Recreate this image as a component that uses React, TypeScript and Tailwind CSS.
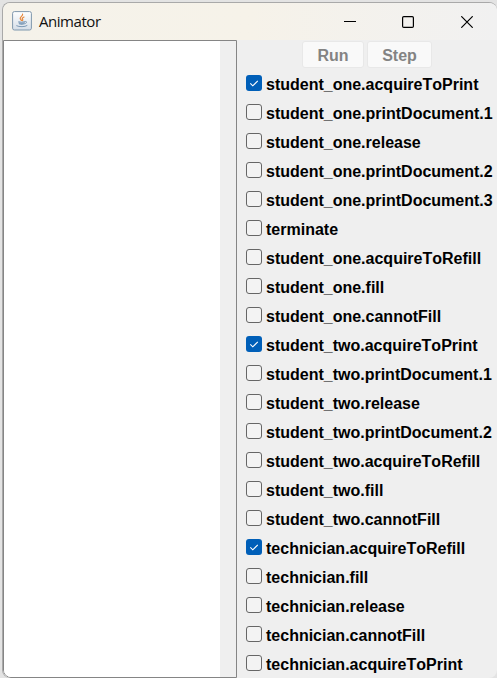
const actions: { name: string; enabled: boolean }[] = [
  { name: "student_one.acquireToPrint", enabled: true },
  { name: "student_one.printDocument.1", enabled: false },
  { name: "student_one.release", enabled: false },
  { name: "student_one.printDocument.2", enabled: false },
  { name: "student_one.printDocument.3", enabled: false },
  { name: "terminate", enabled: false },
  { name: "student_one.acquireToRefill", enabled: false },
  { name: "student_one.fill", enabled: false },
  { name: "student_one.cannotFill", enabled: false },
  { name: "student_two.acquireToPrint", enabled: true },
  { name: "student_two.printDocument.1", enabled: false },
  { name: "student_two.release", enabled: false },
  { name: "student_two.printDocument.2", enabled: false },
  { name: "student_two.acquireToRefill", enabled: false },
  { name: "student_two.fill", enabled: false },
  { name: "student_two.cannotFill", enabled: false },
  { name: "technician.acquireToRefill", enabled: true },
  { name: "technician.fill", enabled: false },
  { name: "technician.release", enabled: false },
  { name: "technician.cannotFill", enabled: false },
  { name: "technician.acquireToPrint", enabled: false },
];

function JavaIcon() {
  return (
    <svg className="size-5 shrink-0" viewBox="0 0 20 20" fill="none">
      <defs>
        <linearGradient id="tile" x1="0" y1="0" x2="0" y2="1">
          <stop offset="0" stopColor="#ffffff" />
          <stop offset="1" stopColor="#d5dee8" />
        </linearGradient>
      </defs>
      <rect x="0.6" y="0.6" width="18.8" height="18.4" rx="1.8" fill="url(#tile)" stroke="#7f97ad" />
      <path d="M10.600 3.200c.5 1.700-2.700 2.500-2.400 4.300.2.800 1 1.300 1.200 2M12 6c-1.700.8-2.100 1.500-1.400 2.300.4.500.3 1-.1 1.400" stroke="#e8873a" strokeWidth="1.200" strokeLinecap="round" />
      <path d="M6.300 10.300c1.600.6 4.800.6 6.600 0l-.5 3c-1.600.6-3.900.6-5.400 0z" fill="#6f90b0" />
      <path d="M13 10.500c2.300-.5 2.300 1.600-.2 2.200M4.700 14.800c2.500 1.300 8.200 1.200 10.300-.2" stroke="#7c99b5" strokeWidth="1" strokeLinecap="round" />
      <path d="M7 11.900h5.400" stroke="#d7e1eb" strokeWidth="0.6" />
    </svg>
  );
}

function TitleBar() {
  return (
    <header className="flex h-[37px] shrink-0 items-center bg-linear-to-r from-[#f5f2ea] via-[#f6f2e9] to-[#f1f1f1] pb-px pl-[9px]">
      <JavaIcon />
      <span className="ml-[7px] grow font-['Open_Sans','Noto_Sans',sans-serif] text-[15px] tracking-[-0.45px] text-[#111]">
        Animator
      </span>
      <div className="flex items-center pt-px text-black">
        <svg className="mr-[46px] size-3" viewBox="0 0 12 12" fill="none" stroke="currentColor">
          <path d="M0 5.500h12" strokeWidth="1.2" />
        </svg>
        <svg className="mr-[47px] size-3" viewBox="0 0 12 12" fill="none" stroke="currentColor">
          <rect x="0.6" y="0.6" width="10.800" height="10.800" rx="1.200" strokeWidth="1.2" />
        </svg>
        <svg className="mr-6 size-3" viewBox="0 0 12 12" fill="none" stroke="currentColor">
          <path d="M.3.3l11.400 11.400M11.700.3L.3 11.700" strokeWidth="1.2" />
        </svg>
      </div>
    </header>
  );
}

function ActionRow({ name, enabled }: { name: string; enabled: boolean }) {
  return (
    <label className="flex h-[29px] shrink-0 items-start pt-[5px]">
      <span
        className={
          enabled
            ? "flex size-4 shrink-0 items-center justify-center rounded-[3px] bg-[#005fb8]"
            : "size-4 shrink-0 rounded-[3px] border border-[#666666] bg-[#f3f3f3]"
        }
      >
        {enabled && (
          <svg className="size-4" viewBox="0 0 16 16" fill="none" stroke="white">
            <path d="M4.300 8.300l2.500 2.500 5-5" strokeWidth="1.100" />
          </svg>
        )}
      </span>
      <span className="ml-1 leading-5 whitespace-nowrap [font-kerning:none]">{name}</span>
    </label>
  );
}

export default function App() {
  return (
    <div className="h-[678px] w-[497px] overflow-hidden bg-[#e3e3e3] pt-[2px] pl-[2px]">
      <div className="flex h-[676px] flex-col overflow-hidden rounded-lg border-t border-l border-[#a9a9a9] bg-[#efefef]">
        <TitleBar />
        <main className="flex min-h-0 grow font-['Liberation_Sans',Arial,sans-serif] text-base font-bold text-black">
          <section className="flex w-[234px] shrink-0 rounded-bl-lg border border-[#858585]">
            <div className="grow rounded-bl-[7px] bg-white" />
            <div className="w-4 bg-[#efefef]" />
          </section>
          <section className="flex grow flex-col pl-[9px]">
            <div className="flex h-[30px] shrink-0 gap-[3px] pt-[1px] pl-[56px] text-[#838383]">
              <button className="h-[27px] w-[62px] rounded-[3px] border border-[#e8e8e8] bg-[#f9f9f9] pt-[2px] leading-6">Run</button>
              <button className="h-[27px] w-[65px] rounded-[3px] border border-[#e8e8e8] bg-[#f9f9f9] pt-[2px] leading-6">Step</button>
            </div>
            {actions.map((action) => (
              <ActionRow key={action.name} name={action.name} enabled={action.enabled} />
            ))}
          </section>
        </main>
      </div>
    </div>
  );
}
